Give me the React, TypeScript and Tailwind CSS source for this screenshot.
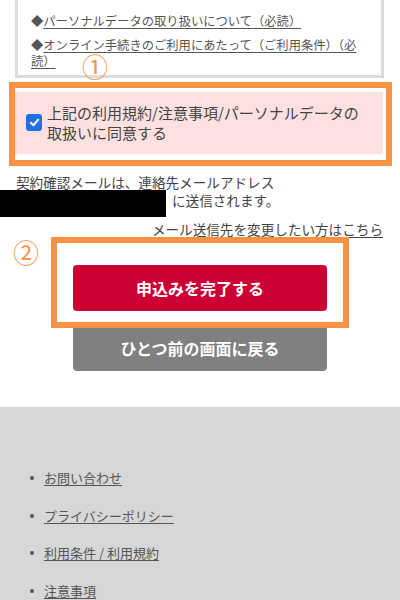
import React from "react";

const font = { fontFamily: '"Noto Sans CJK JP", "Noto Sans", sans-serif' };

export default function App() {
  return (
    <div
      className="relative w-[400px] h-[600px] overflow-hidden bg-white text-[#444]"
      style={font}
    >
      {/* Notice box (scrolled, top cut off) */}
      <div className="ml-[15px] mr-[16px] -mt-[17px] border-[3px] border-t-0 border-[#dcdcdc] px-[13px] pb-[6px] text-[12.3px] leading-[16px] text-[#555]">
        <div className="flex flex-col">
          <p className="mb-[14px]">
            ◆<span className="underline underline-offset-2">お申込みに関する注意事項（必読）</span>
          </p>
          <p className="mb-[8px]">
            ◆<span className="underline underline-offset-2">パーソナルデータの取り扱いについて（必読）</span>
          </p>
          <p className="pr-[4px]">
            ◆<span className="underline underline-offset-2">オンライン手続きのご利用にあたって（ご利用条件）（必読）</span>
          </p>
        </div>
      </div>

      {/* Agreement checkbox */}
      <div className="ml-[15px] mr-[17px] mt-[14px] h-[62px] bg-[#fde1e1] flex items-start pl-[11px] pt-[11px]">
        <span className="mt-[11px] w-[16px] h-[17px] rounded-[3px] bg-[#1f6fe5] flex items-center justify-center shrink-0">
          <svg width="11" height="11" viewBox="0 0 12 12">
            <path d="M2 6.3 L4.8 9 L10 3" fill="none" stroke="white" strokeWidth="2.2" strokeLinecap="round" strokeLinejoin="round" />
          </svg>
        </span>
        <p className="ml-[5px] text-[15px] leading-[20px] text-[#444]">
          上記の利用規約/注意事項/パーソナルデータの
          <br />
          取扱いに同意する
        </p>
      </div>

      {/* Mail info */}
      <p className="mt-[18px] pl-[16px] text-[13.6px] leading-[20px]">契約確認メールは、連絡先メールアドレス</p>
      <div className="-mt-[2px] flex items-start">
        <div className="w-[166px] h-[27px] bg-black" />
        <span className="ml-[6px] text-[13.6px] leading-[20px]">に送信されます。</span>
      </div>
      <p className="mt-[2px] pr-[17px] text-right text-[13.6px] leading-[20px]">
        <span className="underline underline-offset-2">メール送信先を変更したい方はこちら</span>
      </p>

      {/* Buttons */}
      <div className="mt-[26px] flex flex-col items-center gap-[14px]">
        <button className="w-[254px] h-[46px] rounded-[4px] bg-[#cc0033] text-white text-[16px] font-bold">
          申込みを完了する
        </button>
        <button className="w-[254px] h-[46px] rounded-[4px] bg-[#808080] text-white text-[16px] font-bold">
          ひとつ前の画面に戻る
        </button>
      </div>

      {/* Footer */}
      <div className="mt-[36px] bg-[#d7d7d7] pt-[61px] pb-[40px] pl-[30px] text-[13px] leading-[20px] text-[#555]">
        <ul className="flex flex-col gap-[17.7px]">
          {["お問い合わせ", "プライバシーポリシー", "利用条件 / 利用規約", "注意事項"].map((t) => (
            <li key={t} className="flex items-center">
              <span className="w-[4px] h-[4px] rounded-full bg-[#555]" />
              <span className="ml-[10px] underline underline-offset-2">{t}</span>
            </li>
          ))}
        </ul>
      </div>

      {/* Annotation overlays */}
      <div className="absolute left-[9px] top-[82px] w-[383px] h-[84px] border-[6px] border-[#f99245]" />
      <span className="absolute left-[82px] top-[50px] text-[26px] leading-[32px] text-[#f99245]">①</span>
      <div className="absolute left-[51px] top-[237px] w-[298px] h-[91px] border-[6px] border-[#f99245]" />
      <span className="absolute left-[13px] top-[236px] text-[26px] leading-[32px] text-[#f99245]">②</span>
    </div>
  );
}
